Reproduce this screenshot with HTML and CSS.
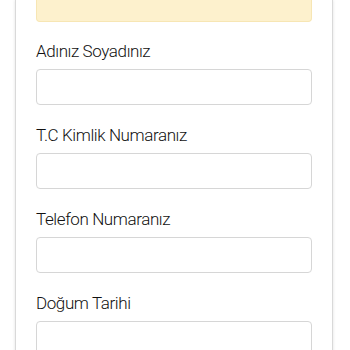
FILE: index.html
```html
<!DOCTYPE html>
<html lang="tr">
<head>
<meta charset="utf-8">
<link rel="stylesheet" href="styles.css">
</head>
<body>
<div class="card">
  <div class="notice"></div>
  <form class="form">
    <div class="field">
      <label class="label">Adınız Soyadınız</label>
      <input class="input" type="text">
    </div>
    <div class="field">
      <label class="label">T.C Kimlik Numaranız</label>
      <input class="input" type="text">
    </div>
    <div class="field">
      <label class="label">Telefon Numaranız</label>
      <input class="input" type="text">
    </div>
    <div class="field">
      <label class="label">Doğum Tarihi</label>
      <input class="input" type="text">
    </div>
  </form>
</div>
</body>
</html>
```
FILE: styles.css
```css
html, body {
  margin: 0;
  padding: 0;
  background: #ffffff;
  height: 350px;
  overflow: hidden;
}
.card {
  margin: 0 15px 0 15px;
  width: 318px;
  min-height: 400px;
  border-left: 1px solid #d9d9d9;
  border-right: 1px solid #d9d9d9;
  box-shadow: 0 0 3px rgba(0,0,0,0.12);
  box-sizing: border-box;
  padding: 0 20px;
  font-family: Roboto, "Noto Sans", sans-serif;
}
.notice {
  height: 22px;
  background: #fdf1cd;
  border: 1px solid #f7e6b4;
  border-top: none;
  border-radius: 0 0 4px 4px;
  box-sizing: border-box;
}
.form {
  display: flex;
  flex-direction: column;
}
.field {
  display: flex;
  flex-direction: column;
  margin-top: 17px;
}
.field + .field {
  margin-top: 18px;
}
.label {
  font-size: 17px;
  font-weight: 300;
  letter-spacing: -0.4px;
  line-height: 24px;
  color: #111111;
  margin-bottom: 6px;
}
.input {
  height: 36px;
  box-sizing: border-box;
  border: 1px solid #d6d6d6;
  border-radius: 4px;
  margin: 0;
  padding: 0 10px;
  background: #fff;
  font: inherit;
}
```
